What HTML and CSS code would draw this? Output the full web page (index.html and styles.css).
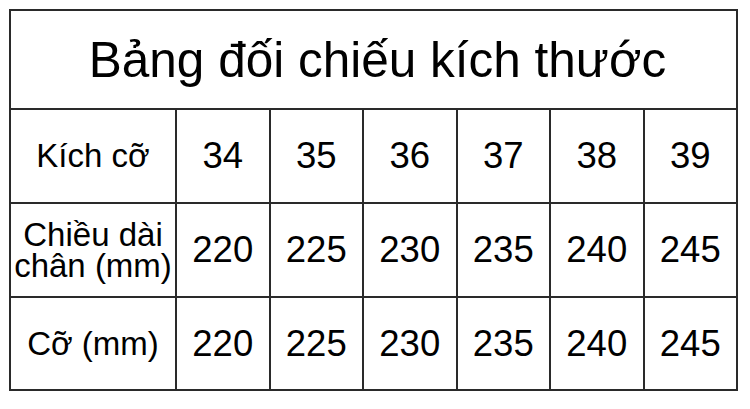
FILE: index.html
```html
<!DOCTYPE html>
<html lang="vi">
<head>
<meta charset="utf-8">
<title>Bảng đối chiếu kích thước</title>
<link rel="stylesheet" href="styles.css">
</head>
<body>
<div class="chart">
  <div class="cell title">Bảng đối chiếu kích thước</div>
  <div class="cell label">Kích cỡ</div>
  <div class="cell num">34</div>
  <div class="cell num">35</div>
  <div class="cell num">36</div>
  <div class="cell num">37</div>
  <div class="cell num">38</div>
  <div class="cell num">39</div>
  <div class="cell label two">Chiều dài<br>chân (mm)</div>
  <div class="cell num">220</div>
  <div class="cell num">225</div>
  <div class="cell num">230</div>
  <div class="cell num">235</div>
  <div class="cell num">240</div>
  <div class="cell num">245</div>
  <div class="cell label">Cỡ (mm)</div>
  <div class="cell num">220</div>
  <div class="cell num">225</div>
  <div class="cell num">230</div>
  <div class="cell num">235</div>
  <div class="cell num">240</div>
  <div class="cell num">245</div>
</div>
</body>
</html>
```
FILE: styles.css
```css
html, body {
  margin: 0;
  padding: 0;
  background: #ffffff;
}
body {
  padding: 9px;
  font-family: "Liberation Sans", Arial, sans-serif;
  color: #000;
}
.chart {
  display: grid;
  width: 729px;
  box-sizing: border-box;
  grid-template-columns: 164px repeat(6, 91.5px);
  grid-template-rows: 97px 92px 92px 91px;
  gap: 2px;
  padding: 2px;
  background: #2a2a2a;
}
.cell {
  background: #ffffff;
  display: flex;
  align-items: center;
  justify-content: center;
  text-align: center;
}
.title {
  grid-column: 1 / -1;
  font-size: 49.5px;
  padding-left: 8px;
}
.label {
  font-size: 33px;
}
.label.two {
  line-height: 31px;
}
.num {
  font-size: 36.5px;
}
```
